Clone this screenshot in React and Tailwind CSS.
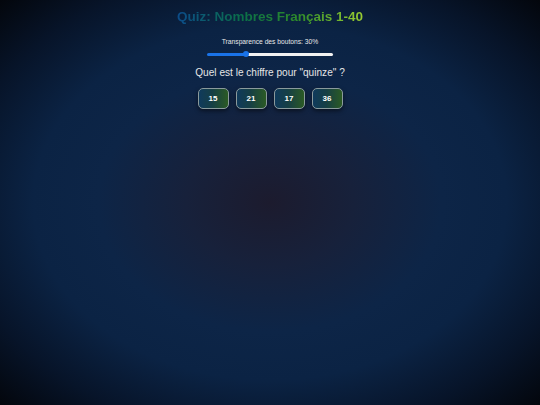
export default function App() {
  const answers = ["15", "21", "17", "36"];
  return (
    <div
      className="relative w-[540px] h-[405px] overflow-hidden flex flex-col items-center"
      style={{
        fontFamily: '"Liberation Sans", Arial, sans-serif',
      }}
    >
      <div className="absolute inset-0 w-[540px] h-[405px] bg-[radial-gradient(ellipse_farthest-corner_at_center,#1c1b2e_0%,#17213b_22%,#0d2547_45%,#0b2344_62%,#071429_82%,#03060c_100%)]" />
      <div className="relative flex flex-col items-center w-full">
        <h1 className="mt-[8px] text-[13.5px] leading-[17px] font-bold bg-[linear-gradient(90deg,#0c4c8a_0%,#0a6f48_35%,#2e8b2a_65%,#9acd32_100%)] bg-clip-text text-transparent">
          Quiz: Nombres Français 1-40
        </h1>
        <div className="mt-[12px] text-[6.7px] leading-[9px] text-[#e8e8e8]">
          Transparence des boutons: 30%
        </div>
        <div className="mt-[5px] relative w-[126px] h-[6px] flex items-center">
          <div className="w-[39px] h-[3px] rounded-l-full bg-[#1a73e8]" />
          <div className="flex-1 h-[3px] rounded-r-full bg-[#f2f2f2]" />
          <div className="absolute left-[36px] top-0 w-[6px] h-[6px] rounded-full bg-[#1a73e8]" />
        </div>
        <div className="mt-[9px] text-[10.1px] leading-[13px] text-[#e6e6e6]">
          Quel est le chiffre pour "quinze" ?
        </div>
        <div className="mt-[9px] flex gap-[7px]">
          {answers.map((a) => (
            <div
              key={a}
              className="w-[31px] h-[21px] rounded-[5px] border border-[#8a9a9c] bg-[linear-gradient(90deg,#0f3a5c_0%,#163f45_45%,#2b5a24_100%)] shadow-[0_2px_4px_rgba(0,0,0,0.5)] flex items-center justify-center text-[8px] font-bold text-white"
            >
              {a}
            </div>
          ))}
        </div>
      </div>
    </div>
  );
}
